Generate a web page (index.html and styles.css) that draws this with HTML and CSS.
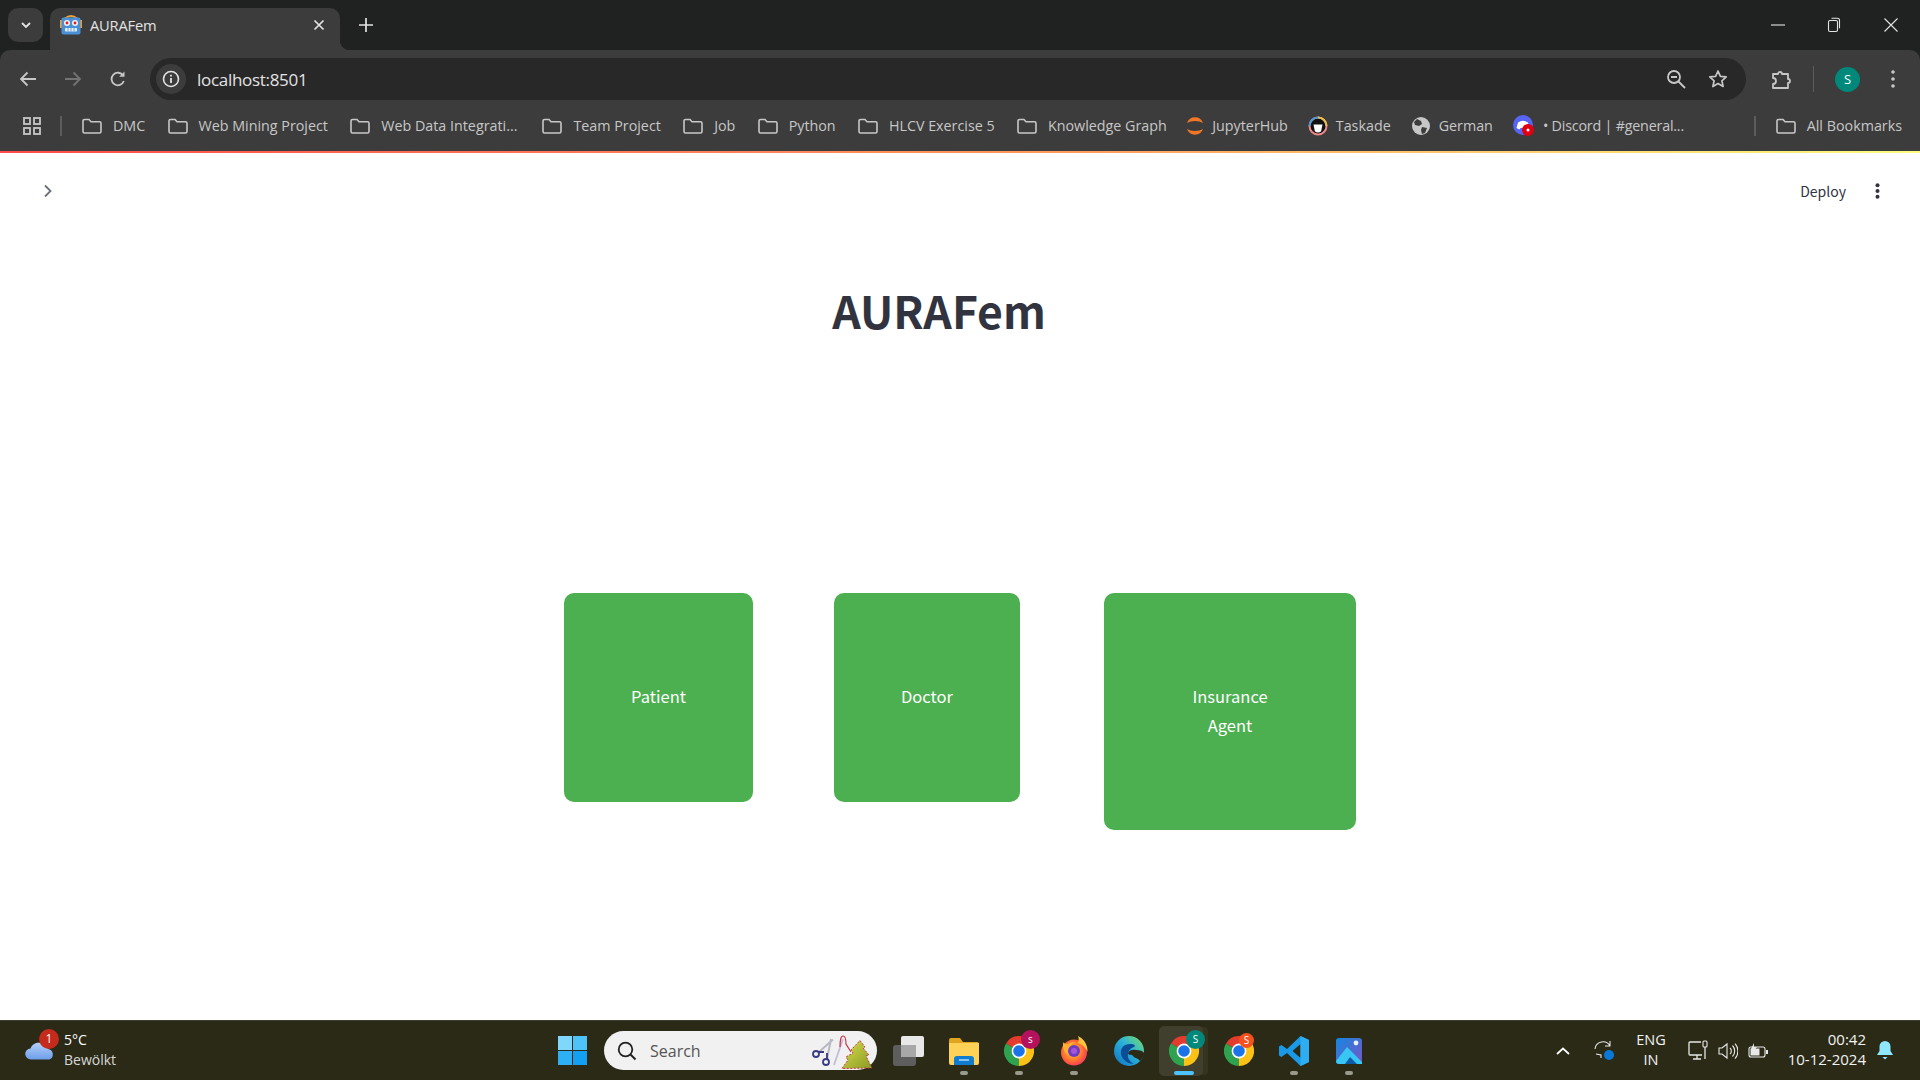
FILE: index.html
```html
<!DOCTYPE html>
<html lang="en">
<head>
    <meta charset="UTF-8">
    <title>AURAFem</title>
    <link rel="stylesheet" href="styles.css">
</head>
<body>
    <svg class="defs" width="0" height="0">
        <defs>
            <linearGradient id="cloudFill" x1="0" y1="0" x2="0" y2="1"><stop offset="0" stop-color="#b4d0f8"/><stop offset="1" stop-color="#6d9eea"/></linearGradient>
            <linearGradient id="treeFill" x1="0" y1="0" x2="1" y2="1"><stop offset="0" stop-color="#d8dc4c"/><stop offset="1" stop-color="#8a9c24"/></linearGradient>
            <radialGradient id="foxBody" cx=".45" cy=".45" r=".65"><stop offset=".35" stop-color="#ff9a2a"/><stop offset=".7" stop-color="#ff5a3c"/><stop offset="1" stop-color="#f0267e"/></radialGradient>
            <linearGradient id="foxTail" x1="1" y1="0" x2="0" y2="1"><stop offset="0" stop-color="#ffe14a"/><stop offset="1" stop-color="#ff9a2a"/></linearGradient>
            <linearGradient id="edgeRing" x1="0" y1="1" x2="1" y2="0"><stop offset="0" stop-color="#0f6fc4"/><stop offset=".55" stop-color="#2bb4d8"/><stop offset="1" stop-color="#7ede62"/></linearGradient>
            <linearGradient id="photoSky" x1="0" y1="0" x2="1" y2="1"><stop offset="0" stop-color="#1487e0"/><stop offset="1" stop-color="#7a55c4"/></linearGradient>
        </defs>
        <symbol id="folder" viewBox="0 0 20 16">
            <path d="M1 3a1.500 1.500 0 0 1 1.500-1.500h4.500l2 2.200h8.500a1.500 1.500 0 0 1 1.500 1.500v8.300a1.500 1.500 0 0 1-1.500 1.500H2.500a1.500 1.500 0 0 1-1.500-1.500z" fill="none" stroke="#c7c7c7" stroke-width="1.600"/>
        </symbol>
        <symbol id="chrome" viewBox="0 0 30 30">
            <path d="M15 15 2 7.500A15 15 0 0 1 28 7.500z" fill="#e33b2e"/>
            <path d="M15 15 28 7.500A15 15 0 0 1 15 30z" fill="#fbc116"/>
            <path d="M15 15 15 30A15 15 0 0 1 2 7.500z" fill="#2fa24f"/>
            <circle cx="15" cy="15" r="7.400" fill="#fff"/>
            <circle cx="15" cy="15" r="5.800" fill="#1a73e8"/>
        </symbol>
    </svg>

    <div class="tab-strip">
        <button class="tab-list">
            <svg width="14" height="14" viewBox="0 0 14 14"><path d="M3 5l4 4 4-4" fill="none" stroke="#e3e3e3" stroke-width="1.800"/></svg>
        </button>
        <div class="tab">
            <svg class="favicon" width="22" height="22" viewBox="0 0 22 22">
                <path d="M5 4.500Q11-.5 17 4.500" fill="none" stroke="#e8a33a" stroke-width="2"/>
                <rect x="0" y="6" width="2" height="8" fill="#e8a33a"/>
                <rect x="20" y="6" width="2" height="8" fill="#e8a33a"/>
                <rect x="1.500" y="3.500" width="19" height="17" rx="2" fill="#4a90d9"/>
                <circle cx="7" cy="9" r="3" fill="#f2f2f2"/>
                <circle cx="15" cy="9" r="3" fill="#f2f2f2"/>
                <circle cx="7" cy="9" r="1.400" fill="#e02020"/>
                <circle cx="15" cy="9" r="1.400" fill="#e02020"/>
                <rect x="5" y="14" width="12" height="3.500" rx="1" fill="#e8eef4"/>
                <path d="M8 14v3.500M11 14v3.500M14 14v3.500" stroke="#4a90d9" stroke-width=".8"/>
            </svg>
            <span class="tab-title">AURAFem</span>
            <svg class="tab-close" width="12" height="12" viewBox="0 0 12 12"><path d="M1.500 1.500l9 9M10.500 1.500l-9 9" stroke="#e3e3e3" stroke-width="1.700"/></svg>
        </div>
        <svg class="new-tab" width="16" height="16" viewBox="0 0 16 16"><path d="M8 1v14M1 8h14" stroke="#e3e3e3" stroke-width="1.700"/></svg>
        <div class="window-controls">
            <span class="window-btn"><svg width="14" height="14" viewBox="0 0 14 14"><path d="M0 7h14" stroke="#e3e3e3" stroke-width="1.100"/></svg></span>
            <span class="window-btn"><svg width="14" height="16" viewBox="0 0 14 16"><rect x="1.500" y="3.500" width="9" height="11" rx="1.500" fill="none" stroke="#e3e3e3" stroke-width="1.100"/><path d="M4.500 1.200h6a2 2 0 0 1 2 2v8" fill="none" stroke="#e3e3e3" stroke-width="1.100"/></svg></span>
            <span class="window-btn"><svg width="14" height="14" viewBox="0 0 14 14"><path d="M.5.5l13 13M13.500.5l-13 13" stroke="#e3e3e3" stroke-width="1.100"/></svg></span>
        </div>
    </div>

    <div class="toolbar">
        <span class="nav-btn"><svg width="18" height="16" viewBox="0 0 18 16"><path d="M17 8H2M8.500 1.500 2 8l6.500 6.500" fill="none" stroke="#c7c7c7" stroke-width="1.800"/></svg></span>
        <span class="nav-btn"><svg width="18" height="16" viewBox="0 0 18 16"><path d="M1 8h15M9.500 1.500 16 8l-6.500 6.500" fill="none" stroke="#737373" stroke-width="1.800"/></svg></span>
        <span class="nav-btn"><svg width="18" height="18" viewBox="0 0 18 18"><path d="M14.800 11a6.300 6.300 0 1 1-.6-5.300" fill="none" stroke="#c7c7c7" stroke-width="1.800"/><path d="M15.500 1.500v5.300h-5.300z" fill="#c7c7c7"/></svg></span>
        <div class="omnibox">
            <span class="site-info"><svg width="18" height="18" viewBox="0 0 18 18"><circle cx="9" cy="9" r="7.500" fill="none" stroke="#e3e3e3" stroke-width="1.600"/><path d="M9 8v5M9 4.800v1.800" stroke="#e3e3e3" stroke-width="1.800"/></svg></span>
            <span class="url">localhost:8501</span>
            <svg class="omni-zoom" width="20" height="20" viewBox="0 0 20 20"><circle cx="8" cy="8" r="6" fill="none" stroke="#c7c7c7" stroke-width="1.800"/><path d="M5 8h6M12.500 12.500 19 19" stroke="#c7c7c7" stroke-width="1.800"/></svg>
            <svg class="omni-star" width="20" height="20" viewBox="0 0 20 20"><path d="M10 2l2.400 5.300 5.800.6-4.300 3.900 1.200 5.700L10 14.600l-5.100 2.900 1.200-5.700-4.300-3.900 5.800-.6z" fill="none" stroke="#c7c7c7" stroke-width="1.700" stroke-linejoin="round"/></svg>
        </div>
        <div class="toolbar-end">
            <svg class="extensions" width="21" height="22" viewBox="0 0 21 22"><path d="M2 6h5a2 2 0 0 1 4 0h6v5a2 2 0 0 1 0 4v5H2v-4a3 3 0 0 0 0-6z" fill="none" stroke="#c7c7c7" stroke-width="1.800" stroke-linejoin="round"/></svg>
            <span class="toolbar-sep"></span>
            <span class="avatar">S</span>
            <svg class="kebab" width="4" height="18" viewBox="0 0 4 18"><circle cx="2" cy="2" r="1.800" fill="#c7c7c7"/><circle cx="2" cy="9" r="1.800" fill="#c7c7c7"/><circle cx="2" cy="16" r="1.800" fill="#c7c7c7"/></svg>
        </div>
    </div>

    <div class="bookmarks">
        <svg class="apps" width="18" height="18" viewBox="0 0 18 18"><g fill="none" stroke="#c7c7c7" stroke-width="1.800"><rect x="1" y="1" width="6" height="6"/><rect x="11" y="1" width="6" height="6"/><rect x="1" y="11" width="6" height="6"/><rect x="11" y="11" width="6" height="6"/></g></svg>
        <span class="bm-sep"></span>
        <span class="bm"><svg width="20" height="16"><use href="#folder"/></svg>DMC</span>
        <span class="bm"><svg width="20" height="16"><use href="#folder"/></svg>Web Mining Project</span>
        <span class="bm bm-cut"><svg width="20" height="16"><use href="#folder"/></svg>Web Data Integrati...</span>
        <span class="bm"><svg width="20" height="16"><use href="#folder"/></svg>Team Project</span>
        <span class="bm"><svg width="20" height="16"><use href="#folder"/></svg>Job</span>
        <span class="bm"><svg width="20" height="16"><use href="#folder"/></svg>Python</span>
        <span class="bm"><svg width="20" height="16"><use href="#folder"/></svg>HLCV Exercise 5</span>
        <span class="bm bm-folders-end"><svg width="20" height="16"><use href="#folder"/></svg>Knowledge Graph</span>
        <span class="bm bm-site">
            <svg width="20" height="20" viewBox="0 0 20 20"><path d="M2 7a8.500 8.500 0 0 1 16 0 10 5 0 0 0-16 0zM2 13a8.500 8.500 0 0 0 16 0 10 5 0 0 1-16 0z" fill="#f37626"/></svg>JupyterHub
        </span>
        <span class="bm bm-site">
            <svg width="20" height="20" viewBox="0 0 20 20"><circle cx="10" cy="10" r="8.500" fill="#111" stroke="#e88" stroke-width="2"/><path d="M1.500 10A8.500 8.500 0 0 1 10 1.500" fill="none" stroke="#4a9ad8" stroke-width="2"/><path d="M10 1.500A8.500 8.500 0 0 1 18.500 10" fill="none" stroke="#e8c04a" stroke-width="2"/><path d="M5.500 8.500h9l-1 5a3.500 3 0 0 1-7 0z" fill="#fff"/></svg>Taskade
        </span>
        <span class="bm bm-site">
            <svg width="20" height="20" viewBox="0 0 20 20"><circle cx="10" cy="10" r="9" fill="#c7c7c7"/><path d="M6 3l4 2 1 3-3 2-4-1-1-3zM11 11l5 1-2 5-3 1-1-4z" fill="#3c3c3c"/></svg>German
        </span>
        <span class="bm bm-site bm-discord">
            <svg width="22" height="22" viewBox="0 0 22 22"><circle cx="10" cy="10" r="10" fill="#5865f2"/><path d="M5 7.500a9 9 0 0 1 10 0l1.500 5.500-3 1.500-1-1.500h-5l-1 1.500-3-1.500z" fill="#fff"/><circle cx="15" cy="15" r="6" fill="#e00010"/><circle cx="15" cy="15" r="1.500" fill="#fff"/></svg>• Discord | #general...
        </span>
        <span class="bm-sep bm-sep-end"></span>
        <span class="bm bm-all"><svg width="20" height="16"><use href="#folder"/></svg>All Bookmarks</span>
    </div>
    <div class="rainbow"></div>

    <main class="page">
        <div class="page-top">
            <svg class="sidebar-toggle" width="10" height="14" viewBox="0 0 10 14"><path d="M2 1.500 7.500 7 2 12.500" fill="none" stroke="#6b6f7a" stroke-width="1.800"/></svg>
            <span class="deploy">Deploy</span>
            <svg class="page-menu" width="5" height="16" viewBox="0 0 5 16"><circle cx="2.500" cy="2.200" r="2" fill="#31333f"/><circle cx="2.500" cy="8" r="2" fill="#31333f"/><circle cx="2.500" cy="13.800" r="2" fill="#31333f"/></svg>
        </div>
        <h1 class="app-title">AURAFem</h1>
        <div class="roles">
            <a href="#" class="role-btn role-patient">Patient</a>
            <a href="#" class="role-btn role-doctor">Doctor</a>
            <a href="#" class="role-btn role-agent">Insurance<br>Agent</a>
        </div>
    </main>

    <footer class="taskbar">
        <div class="weather">
            <span class="weather-icon">
                <svg width="30" height="18" viewBox="0 0 30 18"><path d="M6 17.500a5.500 5.500 0 0 1-.5-11C7 2 12 0 16 1c4 .5 6 3 7 6a5.500 5.500 0 0 1 1.500 10.500z" fill="url(#cloudFill)"/></svg>
                <span class="weather-badge">1</span>
            </span>
            <div class="weather-text">
                <div class="temp">5°C</div>
                <div class="sky">Bewölkt</div>
            </div>
        </div>
        <svg class="start" width="29" height="29" viewBox="0 0 29 29">
            <rect width="14" height="14" fill="#7fd8fb"/><rect x="15" width="14" height="14" fill="#4dc3f7"/>
            <rect y="15" width="14" height="14" fill="#2eb0f5"/><rect x="15" y="15" width="14" height="14" fill="#14a0f2"/>
        </svg>
        <div class="search">
            <svg width="20" height="20" viewBox="0 0 20 20"><circle cx="8.500" cy="8.500" r="6.800" fill="none" stroke="#222" stroke-width="1.800"/><path d="M13.500 13.500 18.500 18.500" stroke="#222" stroke-width="2"/></svg>
            <span class="search-label">Search</span>
            <svg class="search-art" width="62" height="36" viewBox="0 0 62 36">
                <path d="M9 19 23 6.500M17 26 21 6" stroke="#b8b8c4" stroke-width="2" fill="none"/>
                <path d="M9 19l5 0M17 26l0-6" stroke="#3a3a80" stroke-width="1.800" fill="none"/>
                <circle cx="6" cy="21" r="3" fill="none" stroke="#3a3a80" stroke-width="1.800"/>
                <circle cx="16" cy="29" r="3" fill="none" stroke="#3a3a80" stroke-width="1.800"/>
                <path d="M24 32 33 6" stroke="#c4bcd8" stroke-width="1.800" fill="none"/>
                <path d="M30 14Q30 3 33 3q3 0 3 8l5 8" stroke="#c8324a" stroke-width="1.200" fill="none"/>
                <path d="M50 7.500 55 14 53 15 59 22 56 23 62 35 32 35.500 38 27 36 24 43 20 41 17z" fill="url(#treeFill)" stroke="#c8324a" stroke-width="1" stroke-dasharray="2 1.500"/>
            </svg>
        </div>
        <div class="task-icons">
            <span class="task-item">
                <svg width="31" height="30" viewBox="0 0 31 30"><rect y="9" width="23" height="21" rx="3" fill="#5e5e5e"/><rect x="8" width="23" height="21" rx="2" fill="#e8e8e8"/><rect x="8" y="9" width="15" height="12" fill="#a8a8a8"/></svg>
            </span>
            <span class="task-item has-dot">
                <svg width="30" height="28" viewBox="0 0 30 28"><path d="M0 3a2 2 0 0 1 2-2h9l3 4h14a2 2 0 0 1 2 2v3H0z" fill="#e0a51e"/><path d="M0 6h30v20a2 2 0 0 1-2 2H2a2 2 0 0 1-2-2z" fill="#fdd257"/><path d="M5 28v-6a3 3 0 0 1 3-3h14a3 3 0 0 1 3 3v6z" fill="#0f7cd0"/><path d="M10 23h10" stroke="#bfe3fa" stroke-width="1.400"/></svg>
            </span>
            <span class="task-item has-dot">
                <svg width="30" height="30"><use href="#chrome"/></svg>
                <span class="profile-badge badge-pink">s</span>
            </span>
            <span class="task-item has-dot">
                <svg width="30" height="30" viewBox="0 0 30 30">
                    <circle cx="15" cy="16.500" r="13" fill="url(#foxBody)"/>
                    <path d="M19 0c6 3 10 9 9.500 16-2-5-6-8-10-9 1.500-2 1.500-5 .5-7z" fill="url(#foxTail)"/>
                    <path d="M4 6c1 2 3 2 5 2 3-2 6-2 8-1-3 0-5 1-5 3l4 1c3 3 1 8-4 8-5 0-8-4-8-9z" fill="#ffb02e"/>
                    <circle cx="15" cy="15" r="6" fill="#6d3bc4"/>
                    <circle cx="15" cy="15" r="3" fill="#a755d8"/>
                </svg>
            </span>
            <span class="task-item">
                <svg width="30" height="30" viewBox="0 0 30 30">
                    <circle cx="15" cy="15" r="15" fill="url(#edgeRing)"/>
                    <path d="M30 17v2H18c-3 0-4-1-4-2 1-3 5-4 8-3 4 0 7 1 8 3z" fill="#2a2a17"/>
                    <path d="M18 19h12c-1 2-2 4-4 6l-2-2c-2-1-5-2-6-4z" fill="#2a2a17"/>
                    <path d="M16 8c-6 0-10 4-9 10 1 6 7 10 13 10-4-2-7-6-6-10 0-3 3-6 6-7 2-1 1-3-4-3z" fill="#0b4d96"/>
                </svg>
            </span>
            <span class="task-item task-active">
                <svg width="30" height="30"><use href="#chrome"/></svg>
                <span class="profile-badge badge-teal">S</span>
            </span>
            <span class="task-item">
                <svg width="30" height="30"><use href="#chrome"/></svg>
                <span class="profile-badge badge-orange">S</span>
            </span>
            <span class="task-item has-dot">
                <svg width="30" height="30" viewBox="0 0 30 30"><path d="M21.500 0 30 4v22l-8.500 4L8 17l-5.500 4L0 19.500v-9L2.500 9 8 13zM21.500 8 13.500 15l8 7z" fill="#1a9ae6"/><path d="M21.500 0 30 4v22l-8.500 4z" fill="#2eaef2"/></svg>
            </span>
            <span class="task-item has-dot">
                <svg width="26" height="26" viewBox="0 0 26 26"><rect width="26" height="26" rx="3" fill="url(#photoSky)"/><path d="M0 23 11 9l15 15v2H3a3 3 0 0 1-3-3z" fill="#38c6f4"/><path d="M9 26l5-7 7 7z" fill="#0d5ca8"/><circle cx="20" cy="5" r="2.400" fill="#e8f0ff"/></svg>
            </span>
        </div>
        <div class="tray">
            <svg class="tray-chevron" width="14" height="8" viewBox="0 0 14 8"><path d="M1 7l6-5.500L13 7" fill="none" stroke="#fff" stroke-width="1.700"/></svg>
            <svg class="tray-sync" width="21" height="21" viewBox="0 0 21 21"><path d="M1 9a8 8 0 0 1 15-3M16 1v5h-5M2 14l5 1v3" fill="none" stroke="#e8e8e8" stroke-width="1.100"/><circle cx="15" cy="15" r="5" fill="#0a78d8"/></svg>
            <div class="lang">ENG<br>IN</div>
            <svg class="tray-net" width="20" height="21" viewBox="0 0 20 21"><path d="M13 2H2a1 1 0 0 0-1 1v11a1 1 0 0 0 1 1h12M5 19h8M9 15v4" fill="none" stroke="#e8e8e8" stroke-width="1.300"/><rect x="15" y="1" width="4" height="6" rx="1" fill="none" stroke="#e8e8e8" stroke-width="1.100"/><path d="M17 7v12" stroke="#e8e8e8" stroke-width="1.300"/></svg>
            <svg class="tray-sound" width="20" height="18" viewBox="0 0 20 18"><path d="M1 6h3l5-4v14l-5-4H1z" fill="none" stroke="#e8e8e8" stroke-width="1.100"/><path d="M12 6a4 4 0 0 1 0 6M14.500 3.500a8 8 0 0 1 0 11M17 1.500a11 11 0 0 1 0 15" fill="none" stroke="#e8e8e8" stroke-width="1.100"/></svg>
            <svg class="tray-battery" width="20" height="16" viewBox="0 0 20 16"><rect x="1" y="4" width="16" height="10" rx="2" fill="none" stroke="#e8e8e8" stroke-width="1.100"/><rect x="2.500" y="5.500" width="9" height="7" fill="#e8e8e8"/><rect x="18" y="7" width="2" height="4" fill="#e8e8e8"/><path d="M6 0 3 6h3l-1 3 4-5H6z" fill="#e8e8e8"/></svg>
            <div class="clock">00:42<br>10-12-2024</div>
            <svg class="tray-bell" width="16" height="19" viewBox="0 0 16 19"><path d="M8 0a5.500 5.500 0 0 1 5.500 5.500V10l2.500 4H0l2.500-4V5.500A5.500 5.500 0 0 1 8 0z" fill="#8fe6ff"/><path d="M5.500 16h5L8 18.500z" fill="#8fe6ff"/></svg>
        </div>
    </footer>
</body>
</html>
```

FILE: styles.css
```css
* {
    box-sizing: border-box;
}
html, body {
    height: 100%;
}
body {
    display: flex;
    flex-direction: column;
    height: 1080px;
    margin: 0;
    overflow: hidden;
    background-color: #202221;
    font-family: "Open Sans", "Noto Sans", sans-serif;
}
.defs {
    position: absolute;
}
svg {
    display: block;
    flex: none;
}

/* browser frame */
.tab-strip {
    display: flex;
    align-items: flex-end;
    height: 50px;
    padding-left: 8px;
    background-color: #202221;
    color: #e3e3e3;
}
.tab-list {
    display: flex;
    align-items: center;
    justify-content: center;
    align-self: flex-start;
    width: 35px;
    height: 34px;
    margin-top: 8px;
    padding: 0;
    border: none;
    border-radius: 10px;
    background-color: #3c3c3c;
}
.tab {
    position: relative;
    display: flex;
    align-items: center;
    width: 290px;
    height: 42px;
    margin-left: 7px;
    padding: 0 15px 8px 10px;
    border-radius: 10px 10px 0 0;
    background-color: #3c3c3c;
}
.tab::after {
    content: "";
    position: absolute;
    right: -10px;
    bottom: 0;
    width: 10px;
    height: 10px;
    background: radial-gradient(circle at 100% 0, transparent 10px, #3c3c3c 10.5px);
}
.favicon {
    margin-right: 8px;
}
.tab-title {
    flex: 1;
    font-size: 14.7px;
    letter-spacing: -0.2px;
}
.new-tab {
    margin: 0 0 17px 18px;
}
.window-controls {
    display: flex;
    align-items: center;
    align-self: flex-start;
    height: 50px;
    margin-left: auto;
    padding-right: 1px;
}
.window-btn {
    display: flex;
    justify-content: center;
    width: 56.5px;
}
.toolbar {
    display: flex;
    align-items: center;
    height: 50px;
    padding: 8px 25px 0 5px;
    background-color: #3c3c3c;
    border-radius: 10px 10px 0 0;
}
.nav-btn {
    display: flex;
    justify-content: center;
    width: 45px;
}
.omnibox {
    display: flex;
    align-items: center;
    flex: 1;
    height: 42px;
    margin-left: 10px;
    padding: 0 18px 0 6px;
    border-radius: 21px;
    background-color: #282828;
}
.site-info {
    display: flex;
    align-items: center;
    justify-content: center;
    width: 30px;
    height: 30px;
    border-radius: 50%;
    background-color: #3c3c3c;
}
.url {
    flex: 1;
    margin-left: 11px;
    color: #e3e3e3;
    font-size: 17px;
    letter-spacing: -0.3px;
}
.omni-star {
    margin-left: 22px;
}
.toolbar-end {
    display: flex;
    align-items: center;
    margin-left: 25px;
}
.toolbar-sep {
    width: 1px;
    height: 26px;
    margin: 0 21px;
    background-color: #5c5c5c;
}
.avatar {
    display: flex;
    align-items: center;
    justify-content: center;
    width: 25px;
    height: 25px;
    border-radius: 50%;
    background-color: #00897b;
    color: #fff;
    font-size: 13px;
}
.kebab {
    margin-left: 31px;
}
.bookmarks {
    display: flex;
    align-items: center;
    height: 51px;
    padding-left: 23px;
    background-color: #3c3c3c;
    color: #c7c7c7;
    font-size: 14.3px;
    white-space: nowrap;
}
.bm-sep {
    width: 2px;
    height: 20px;
    margin: 0 20px 0 19px;
    background-color: #5c5c5c;
}
.bm-sep-end {
    margin-left: auto;
}
.bm {
    display: flex;
    align-items: center;
    gap: 11px;
    margin-right: 22.3px;
}
.bm-cut {
    margin-right: 25px;
}
.bm-folders-end {
    margin-right: 18px;
}
.bm-site {
    gap: 7.5px;
    margin-right: 20.5px;
}
.bm-discord {
    letter-spacing: -0.2px;
}
.bm-all {
    margin-right: 18px;
}
.rainbow {
    height: 2px;
    background: linear-gradient(90deg, #ff4b4b, #ff9a5c 55%, #fffd80);
}

/* streamlit page */
.page {
    flex: 1;
    display: flex;
    flex-direction: column;
    background-color: #fff;
    color: #31333f;
    font-family: "Noto Sans CJK JP", "Open Sans", sans-serif;
}
.page-top {
    display: flex;
    align-items: center;
    height: 76px;
    padding: 0 40px 0 43px;
}
.deploy {
    margin-left: auto;
    font-size: 14px;
}
.page-menu {
    margin-left: 29px;
}
.app-title {
    margin: 45px 0 0;
    padding-right: 42px;
    text-align: center;
    font-size: 44.5px;
    line-height: 72px;
    font-weight: 700;
}
.roles {
    display: grid;
    grid-template-columns: 270px 270px 252px;
    align-items: start;
    justify-content: center;
    margin-top: 247px;
}
.role-btn {
    display: block;
    padding: 89px 0 91px;
    border-radius: 10px;
    background-color: #4caf50;
    color: #fff;
    text-align: center;
    text-decoration: none;
    font-size: 16.5px;
    line-height: 29px;
}
.role-patient {
    width: 189px;
}
.role-doctor {
    width: 186px;
}
.role-agent {
    width: 252px;
    padding-bottom: 90px;
}

/* windows taskbar */
.taskbar {
    display: flex;
    align-items: center;
    height: 60px;
    border-top: 1px solid #3e3e30;
    background-color: #2a2a17;
    color: #fff;
}
.weather {
    display: flex;
    align-items: center;
    width: 558px;
    padding-left: 25px;
}
.weather-icon {
    position: relative;
}
.weather-badge {
    position: absolute;
    top: -13px;
    left: 14px;
    width: 20px;
    height: 20px;
    border-radius: 50%;
    background-color: #c42b1c;
    text-align: center;
    font-size: 12px;
    line-height: 20px;
}
.weather-text {
    margin: -2px 0 0 9px;
    font-size: 14px;
    line-height: 20px;
}
.sky {
    color: #d8d8d8;
}
.search {
    display: flex;
    align-items: center;
    width: 273px;
    height: 39px;
    margin-left: 17px;
    padding: 0 5px 0 13px;
    border-radius: 20px;
    background-color: #f1f1f1;
}
.search-label {
    flex: 1;
    margin-left: 13px;
    color: #555;
    font-size: 16px;
}
.task-icons {
    display: flex;
    margin-left: 4px;
}
.task-item {
    position: relative;
    display: flex;
    align-items: center;
    justify-content: center;
    width: 55px;
    height: 50px;
}
.has-dot::after {
    content: "";
    position: absolute;
    bottom: 1px;
    left: 24px;
    width: 8px;
    height: 4px;
    border-radius: 2px;
    background-color: #9a9a8c;
}
.task-active::before {
    content: "";
    position: absolute;
    top: 0;
    left: 2.5px;
    z-index: 0;
    width: 44px;
    height: 50px;
    border-radius: 5px;
    background-color: #403f2e;
    box-shadow: 6px 0 0 -1px #35341f;
}
.task-active svg,
.task-active .profile-badge {
    z-index: 1;
}
.task-active::after {
    content: "";
    position: absolute;
    bottom: 1px;
    left: 17.5px;
    z-index: 1;
    width: 20px;
    height: 4px;
    border-radius: 2px;
    background-color: #4cc2ff;
}
.profile-badge {
    position: absolute;
    top: 4px;
    right: 6px;
    width: 19px;
    height: 19px;
    border-radius: 50%;
    text-align: center;
    font-size: 10px;
    line-height: 19px;
}
.badge-pink {
    background-color: #b5125e;
}
.badge-teal {
    background-color: #00897b;
}
.badge-orange {
    top: 7px;
    right: 12px;
    width: 15px;
    height: 15px;
    background-color: #f4511e;
    line-height: 15px;
}
.tray {
    display: flex;
    align-items: center;
    margin-left: auto;
    padding-right: 27px;
    color: #f2f2f2;
    font-size: 14.5px;
}
.tray-sync {
    margin-left: 24px;
}
.lang {
    width: 40px;
    margin: -2px 0 0 16px;
    text-align: center;
    line-height: 20px;
}
.tray-net {
    margin-left: 17px;
}
.tray-sound {
    margin-left: 10px;
}
.tray-battery {
    margin-left: 10px;
}
.clock {
    width: 98px;
    margin-top: -3px;
    text-align: right;
    font-size: 15px;
    line-height: 20px;
}
.tray-bell {
    margin-left: 11px;
}
```
